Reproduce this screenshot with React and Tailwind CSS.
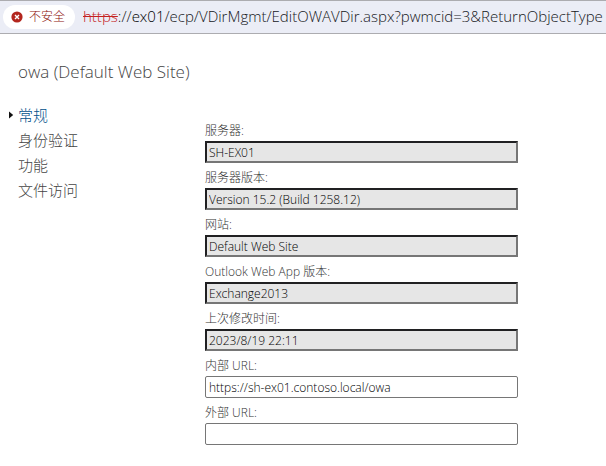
const sections = ["常规", "身份验证", "功能", "文件访问"];

const fields = [
  { id: "server", label: "服务器:", value: "SH-EX01", readOnly: true },
  { id: "version", label: "服务器版本:", value: "Version 15.2 (Build 1258.12)", readOnly: true },
  { id: "site", label: "网站:", value: "Default Web Site", readOnly: true },
  { id: "owa-version", label: "Outlook Web App 版本:", value: "Exchange2013", readOnly: true },
  { id: "modified", label: "上次修改时间:", value: "2023/8/19 22:11", readOnly: true },
  { id: "internal-url", label: "内部 URL:", value: "https://sh-ex01.contoso.local/owa" },
  { id: "external-url", label: "外部 URL:", value: "" },
];

function AddressBar() {
  return (
    <header className="flex h-[34px] items-center gap-2 overflow-hidden border-y border-[#acacb0] bg-[#ebedf6] pl-[3px]">
      <button
        type="button"
        className="flex h-6 w-[72px] shrink-0 items-center gap-[6px] rounded-full bg-white pl-2 text-[12px] font-light text-[#8c0f0b]"
      >
        <svg className="size-3 shrink-0" viewBox="0 0 12 12" aria-hidden="true">
          <circle cx="6" cy="6" r="5.6" fill="#b3261e" />
          <path d="M4 4l4 4M8 4l-4 4" stroke="#fff" strokeWidth="1.4" />
        </svg>
        <span className="whitespace-nowrap">不安全</span>
      </button>
      <div className="pb-[2px] text-[15px] leading-5 font-light whitespace-nowrap text-[#16181c]">
        <span className="text-[#c5221f] line-through">https</span>://
        <span className="text-black">ex01</span>
        /ecp/VDirMgmt/EditOWAVDir.aspx?pwmcid=3&amp;ReturnObjectType
      </div>
    </header>
  );
}

function SectionNav() {
  return (
    <nav className="w-[205px] shrink-0 pl-2">
      <ul>
        {sections.map((name, i) => (
          <li key={name} className="flex h-[25px] items-center">
            <span className="flex w-[10px] shrink-0">
              {i === 0 && (
                <svg className="h-2 w-[6px]" viewBox="0 0 6 8" aria-hidden="true">
                  <path d="M1 0.5L5.2 4L1 7.5z" fill="#111" />
                </svg>
              )}
            </span>
            <a
              href={"#section-" + i}
              className={
                i === 0
                  ? "text-[15px] leading-6 font-light text-[#00508a]"
                  : "text-[15px] leading-6 font-light text-[#444]"
              }
            >
              {name}
            </a>
          </li>
        ))}
      </ul>
    </nav>
  );
}

function Field({ id, label, value, readOnly }) {
  return (
    <div className="flex flex-col pt-1">
      <label htmlFor={id} className="h-[21px] text-[12px] leading-[22px] font-light text-[#333]">
        {label}
      </label>
      <input
        id={id}
        type="text"
        defaultValue={value}
        readOnly={readOnly}
        className={
          readOnly
            ? "h-[22px] w-full border-2 border-t-[#202022] border-r-[#767676] border-b-[#767676] border-l-[#202022] bg-[#e6e6e6] px-[2px] text-[12px] font-light text-black outline-none"
            : "h-[22px] w-full rounded-[2px] border border-[#767676] bg-white px-[3px] text-[12px] font-light text-black outline-none"
        }
      />
    </div>
  );
}

export default function App() {
  return (
    <div className="min-h-screen bg-white font-['Open_Sans','Noto_Sans_CJK_SC',sans-serif]">
      <AddressBar />
      <main className="pt-6">
        <h1 className="pl-[18px] text-[17px] leading-7 font-light text-[#444]">
          owa (Default Web Site)
        </h1>
        <div className="flex pt-4">
          <SectionNav />
          <form className="w-[313px] pt-[14px]">
            {fields.map((field) => (
              <Field key={field.id} {...field} />
            ))}
          </form>
        </div>
      </main>
    </div>
  );
}
